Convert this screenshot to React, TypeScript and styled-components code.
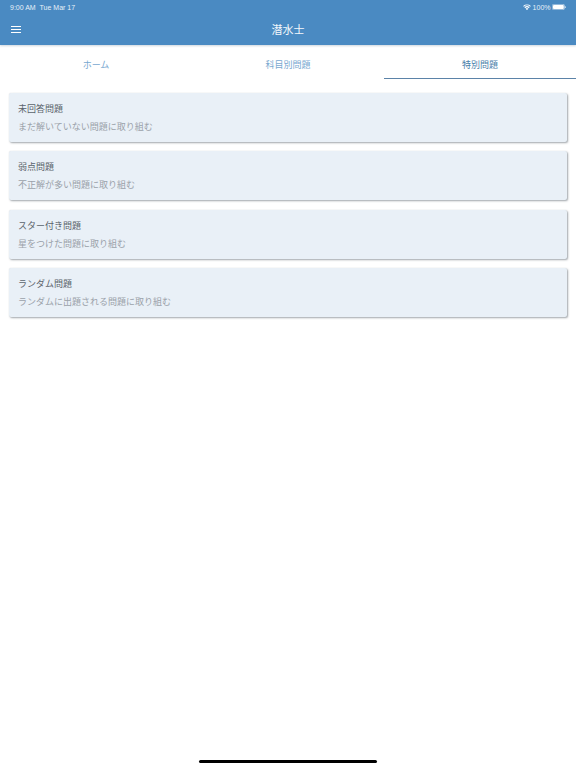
import React from "react";
import styled, { createGlobalStyle } from "styled-components";

const Global = createGlobalStyle`
  html, body { margin: 0; padding: 0; background: #fff; }
  body { font-family: "Liberation Sans", "Noto Sans CJK JP", sans-serif; }
  * { box-sizing: border-box; }
`;

const Page = styled.div`
  position: relative;
  width: 576px;
  height: 768px;
  overflow: hidden;
  background: #fff;
`;

const Header = styled.header`
  height: 45px;
  background: #4a8ac2;
  color: #fff;
  box-shadow: 0 1px 2px rgba(60, 90, 120, 0.25);
`;

const StatusBar = styled.div`
  height: 14px;
  padding: 0 10px;
  display: flex;
  align-items: center;
  justify-content: space-between;
  font-size: 7px;
  color: #e6f0f8;
`;

const StatusRight = styled.div`
  display: flex;
  align-items: center;
  gap: 1.5px;
`;

const NavBar = styled.div`
  height: 30px;
  padding: 0 11px;
  display: flex;
  align-items: center;
`;

const Title = styled.div`
  flex: 1;
  text-align: center;
  font-size: 11px;
  font-family: "Noto Sans CJK JP", sans-serif;
  margin-right: 10px;
  color: #f4f8fc;
`;

const Tabs = styled.nav`
  height: 34px;
  display: grid;
  grid-template-columns: repeat(3, 1fr);
`;

const Tab = styled.div<{ $active?: boolean }>`
  display: flex;
  align-items: center;
  justify-content: center;
  padding-top: 5px;
  font-family: "Noto Sans CJK JP", sans-serif;
  font-size: 9px;
  color: ${(p) => (p.$active ? "#4a7eaa" : "#78a8d0")};
  border-bottom: 1px solid ${(p) => (p.$active ? "#5b83a8" : "transparent")};
`;

const List = styled.main`
  padding: 14px 9px 0;
  display: flex;
  flex-direction: column;
  gap: 9.4px;
`;

const Card = styled.div`
  height: 49px;
  padding: 9px 9px 0;
  background: #e9f0f7;
  border-radius: 2px;
  box-shadow: 1px 1px 2px rgba(70, 80, 90, 0.5), 0 0 1px rgba(70, 80, 90, 0.15);
  font-family: "Noto Sans CJK JP", sans-serif;
`;

const CardTitle = styled.div`
  font-size: 9px;
  line-height: 14px;
  color: #5a636b;
`;

const CardText = styled.div`
  margin-top: 4px;
  font-size: 9px;
  line-height: 14px;
  color: #9aa1a9;
`;

const HomeBar = styled.div`
  position: absolute;
  left: 199px;
  top: 760px;
  width: 178px;
  height: 3px;
  border-radius: 2px;
  background: #000;
`;

const items = [
  ["未回答問題", "まだ解いていない問題に取り組む"],
  ["弱点問題", "不正解が多い問題に取り組む"],
  ["スター付き問題", "星をつけた問題に取り組む"],
  ["ランダム問題", "ランダムに出題される問題に取り組む"],
];

export default function App() {
  return (
    <Page>
      <Global />
      <Header>
        <StatusBar>
          <span>9:00 AM&nbsp;&nbsp;Tue Mar 17</span>
          <StatusRight>
            <svg width="8" height="6.5" viewBox="0 0 10 8" fill="#fff">
              <path d="M5 7.6 3.4 5.8a2.3 2.3 0 0 1 3.2 0zM2.7 5.1 1.8 4a4.8 4.8 0 0 1 6.4 0l-.9 1.1a3.4 3.4 0 0 0-4.6 0zM1.1 3.3.2 2.3a7.2 7.2 0 0 1 9.6 0l-.9 1a5.9 5.9 0 0 0-7.8 0z" />
            </svg>
            <span>100%</span>
            <svg width="14" height="6" viewBox="0 0 14 6">
              <rect x="0.3" y="0.3" width="12.2" height="5.4" rx="1.4" fill="none" stroke="#dfeaf3" strokeWidth="0.6" />
              <rect x="1" y="1" width="10.8" height="4" rx="0.8" fill="#fff" />
              <rect x="13" y="2" width="0.9" height="2" rx="0.45" fill="#dfeaf3" />
            </svg>
          </StatusRight>
        </StatusBar>
        <NavBar>
          <svg width="10" height="7" viewBox="0 0 10 7" fill="#fff">
            <rect width="10" height="1" y="0" />
            <rect width="10" height="1" y="3" />
            <rect width="10" height="1" y="6" />
          </svg>
          <Title>潜水士</Title>
        </NavBar>
      </Header>
      <Tabs>
        <Tab>ホーム</Tab>
        <Tab>科目別問題</Tab>
        <Tab $active>特別問題</Tab>
      </Tabs>
      <List>
        {items.map(([t, d]) => (
          <Card key={t}>
            <CardTitle>{t}</CardTitle>
            <CardText>{d}</CardText>
          </Card>
        ))}
      </List>
      <HomeBar />
    </Page>
  );
}
